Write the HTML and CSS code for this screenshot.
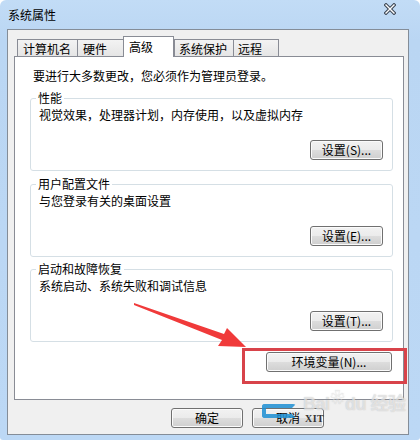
FILE: index.html
```html
<!DOCTYPE html>
<html lang="zh-CN">
<head>
<meta charset="utf-8">
<title>系统属性</title>
<link rel="stylesheet" href="styles.css">
</head>
<body>
<div class="window">
  <div class="titlebar">
    <span class="title">系统属性</span>
    <svg class="close" width="12" height="12" viewBox="0 0 12 12">
      <path d="M2 2 L10 10 M10 2 L2 10" stroke="#3a4452" stroke-width="3.4" stroke-linecap="square"/>
      <path d="M2 2 L10 10 M10 2 L2 10" stroke="#ffffff" stroke-width="1.4" stroke-linecap="square"/>
    </svg>
  </div>
  <div class="client">
    <div class="tabs">
      <div class="tab t1">计算机名</div>
      <div class="tab t2">硬件</div>
      <div class="tab t3 active">高级</div>
      <div class="tab t4">系统保护</div>
      <div class="tab t5">远程</div>
    </div>
    <div class="pane">
      <p class="intro">要进行大多数更改，您必须作为管理员登录。</p>
      <fieldset class="group">
        <legend>性能</legend>
        <p class="desc">视觉效果，处理器计划，内存使用，以及虚拟内存</p>
        <div class="btnrow"><button class="btn">设置(S)...</button></div>
      </fieldset>
      <fieldset class="group">
        <legend>用户配置文件</legend>
        <p class="desc">与您登录有关的桌面设置</p>
        <div class="btnrow"><button class="btn">设置(E)...</button></div>
      </fieldset>
      <fieldset class="group g3">
        <legend>启动和故障恢复</legend>
        <p class="desc">系统启动、系统失败和调试信息</p>
        <div class="btnrow"><button class="btn">设置(T)...</button></div>
      </fieldset>
      <div class="envrow"><button class="btn env">环境变量(N)...</button></div>
    </div>
    <div class="footer">
      <button class="btn foot">确定</button>
      <button class="btn foot">取消</button>
    </div>
  </div>
  <div class="highlight"></div>
  <svg class="arrow" width="420" height="442" viewBox="0 0 420 442">
    <polygon points="134,303 224,334 227,328 246,347 218,346 222,340 134,305" fill="#f03a3a"/>
  </svg>
  <div class="logo-mark"></div>
  <div class="logo-text">XIT</div>
  <div class="watermark">Bai<span class="paw">❀</span>du 经验</div>
</div>
</body>
</html>
```
FILE: styles.css
```css
* { box-sizing: border-box; }
html, body { margin: 0; padding: 0; }
body {
  background: #ffffff;
  font-family: "Noto Sans CJK SC", "Liberation Sans", sans-serif;
  font-size: 12px;
  color: #000;
}
.window {
  position: relative;
  width: 420px;
  height: 440px;
  background: linear-gradient(#c2dcf6, #bad6f3 40px, #bcd8f5);
  border-radius: 6px 6px 3px 3px;
  overflow: hidden;
}
.titlebar {
  height: 29px;
  display: flex;
  align-items: center;
  padding: 0 24px 0 8px;
}
.title {
  line-height: 16px;
}
.close {
  margin-left: auto;
  align-self: flex-start;
  margin-top: 3px;
}
.client {
  margin: 0 11px 0 7px;
  height: 406px;
  border: 1px solid #848d98;
  background: #f0f0f0;
  padding: 6px 0 6px 0;
  display: flex;
  flex-direction: column;
}
.tabs {
  height: 20px;
  display: flex;
  align-items: flex-end;
  padding-left: 9px;
  position: relative;
  z-index: 2;
}
.tab {
  height: 17px;
  border: 1px solid #898c95;
  border-bottom: none;
  border-right: none;
  background: linear-gradient(#f3f3f3, #e5e5e5);
  padding: 1px 0 0 5px;
  line-height: 16px;
  white-space: nowrap;
  overflow: hidden;
}
.t1 { width: 60px; }
.t2 { width: 46px; }
.t3 { width: 51px; }
.t4 { width: 59px; padding-left: 4px; }
.t5 { width: 46px; padding-left: 4px; border-right: 1px solid #898c95; }
.tab.active {
  height: 21px;
  margin-bottom: -1px;
  background: #ffffff;
  border-right: 1px solid #898c95;
  padding-top: 2px;
}
.pane {
  margin: 0 4px 0 6px;
  height: 344px;
  border: 1px solid #898c95;
  background: #ffffff;
  padding: 11px 10px 0 15px;
  position: relative;
  z-index: 1;
}
.intro {
  margin: 0 0 0 3px;
  line-height: 16px;
}
.group {
  margin: 7px 0 0 0;
  border: 1px solid #d5dfe5;
  border-radius: 3px;
  padding: 2px 9px 10px 8px;
  min-inline-size: 0;
}
.group + .group { margin-top: 6px; }
.group.g3 { margin-top: 5px; }
.group legend {
  margin-left: -3px;
  padding: 0 2px;
  line-height: 14px;
  color: #000;
}
.desc {
  margin: 0;
  line-height: 16px;
}
.btnrow {
  display: flex;
  justify-content: flex-end;
  margin-top: 17px;
}
.btn {
  font-family: "Noto Sans CJK SC", "Liberation Sans", sans-serif;
  font-size: 12px;
  color: #000;
  height: 20px;
  width: 73px;
  padding: 0;
  line-height: 18px;
  border: 1px solid #707070;
  border-radius: 3px;
  background: linear-gradient(#f2f2f2 0%, #ebebeb 50%, #dddddd 50%, #cfcfcf 100%);
  box-shadow: inset 0 0 0 1px #fbfbfb;
  text-align: center;
}
.envrow {
  display: flex;
  justify-content: flex-end;
  margin-top: 10px;
  padding-right: 1px;
}
.btn.env { width: 126px; }
.footer {
  display: flex;
  justify-content: flex-end;
  gap: 9px;
  margin-top: 8px;
  padding-right: 84px;
}
.btn.foot { width: 72px; }
.highlight {
  position: absolute;
  left: 242px;
  top: 348px;
  width: 165px;
  height: 36px;
  border: 3px solid #d8434a;
  z-index: 5;
}
.arrow {
  position: absolute;
  left: 0;
  top: 0;
  z-index: 6;
  pointer-events: none;
}
.logo-mark {
  position: absolute;
  left: 262px;
  top: 404px;
  width: 34px;
  height: 14px;
  border: 4px solid #1d8fd3;
  border-right-color: transparent;
  border-radius: 3px;
  opacity: 0.85;
  z-index: 7;
}
.logo-text {
  position: absolute;
  left: 305px;
  top: 414px;
  font-family: "Liberation Serif", serif;
  font-size: 10px;
  font-weight: bold;
  line-height: 10px;
  color: #333;
  letter-spacing: 0.5px;
  z-index: 7;
}
.watermark {
  position: absolute;
  left: 303px;
  top: 395px;
  font-family: "Liberation Sans", "Noto Sans CJK SC", sans-serif;
  font-size: 18px;
  line-height: 18px;
  font-weight: bold;
  color: rgba(255, 255, 255, 0.55);
  text-shadow: 0 0 1px rgba(140, 140, 140, 0.55);
  z-index: 8;
  white-space: nowrap;
  letter-spacing: -0.5px;
}
.paw { font-size: 14px; line-height: 14px; margin: 0 1px; position: relative; top: -8px; }
```
